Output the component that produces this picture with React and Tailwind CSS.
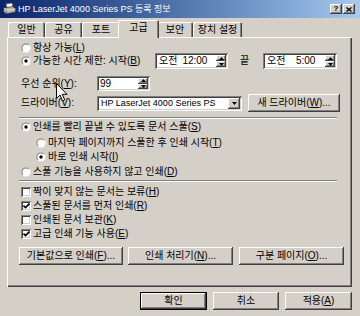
import React from "react";

const raised = "bg-[#d4d0c8] shadow-[inset_-1px_-1px_#404040,inset_1px_1px_#ffffff,inset_-2px_-2px_#808080,inset_2px_2px_#d4d0c8]";
const sunken = "bg-white shadow-[inset_1px_1px_#808080,inset_-1px_-1px_#ffffff,inset_2px_2px_#404040,inset_-2px_-2px_#d4d0c8]";

function U({ children }) {
  return <span className="underline underline-offset-1">{children}</span>;
}

function Radio({ checked }) {
  return (
    <svg width="10" height="10" viewBox="0 0 12 12" className="shrink-0">
      <defs>
        <linearGradient id="rg" x1="0" y1="0" x2="1" y2="1">
          <stop offset="0.45" stopColor="#808080" />
          <stop offset="0.55" stopColor="#ffffff" />
        </linearGradient>
      </defs>
      <circle cx="6" cy="6" r="5.5" fill="url(#rg)" />
      <circle cx="6" cy="6" r="4.3" fill="#fff" />
      {checked && <circle cx="6" cy="6" r="2" fill="#000" />}
    </svg>
  );
}

function Check({ checked }) {
  return (
    <div className={`w-[10px] h-[10px] shrink-0 flex items-center justify-center ${sunken}`}>
      {checked && (
        <svg width="7" height="6" viewBox="0 0 7 6">
          <path d="M0.5 2.5 L2.5 4.5 L6.5 0.5" stroke="#000" strokeWidth="1.6" fill="none" />
        </svg>
      )}
    </div>
  );
}

function Spinner() {
  return (
    <div className="flex flex-col w-[12px] h-full py-[2px] pr-[2px]">
      <div className={`flex-1 flex items-center justify-center ${raised}`}>
        <svg width="5" height="3" viewBox="0 0 5 3"><path d="M0 3 L2.5 0 L5 3Z" fill="#000" /></svg>
      </div>
      <div className={`flex-1 flex items-center justify-center ${raised}`}>
        <svg width="5" height="3" viewBox="0 0 5 3"><path d="M0 0 L2.5 3 L5 0Z" fill="#000" /></svg>
      </div>
    </div>
  );
}

function TimeField({ left, right, w }) {
  return (
    <div className={`flex items-center h-[16px] ${w} ${sunken}`}>
      <div className="flex-1 flex pl-[4px] gap-[5px]">
        <span>{left}</span>
        <span>{right}</span>
      </div>
      <Spinner />
    </div>
  );
}

function Btn({ children, w, def }) {
  if (def) {
    return (
      <div className={`${w} h-[18px] border border-black flex`}>
        <div className={`flex-1 flex items-center justify-center ${raised}`}>{children}</div>
      </div>
    );
  }
  return <div className={`${w} h-[18px] flex items-center justify-center ${raised}`}>{children}</div>;
}

export default function App() {
  const tabs = [
    { label: "일반", w: "w-[37px]" },
    { label: "공유", w: "w-[37px]" },
    { label: "포트", w: "w-[38px]" },
    { label: "고급", w: "w-[37px]", active: true },
    { label: "보안", w: "w-[36px]" },
    { label: "장치 설정", w: "w-[49px]" },
  ];

  return (
    <div className="relative w-[360px] h-[316px] bg-[#d4d0c8] overflow-hidden flex flex-col text-[10px] leading-[12px] text-black font-['Liberation_Sans','Noto_Sans_CJK_KR',sans-serif]">
      {/* title bar */}
      <div className="h-[18px] shrink-0 flex items-center pl-[3px] pr-[5px] bg-linear-to-r from-[#0a246a] to-[#a6caf0]">
        <svg width="13" height="12" viewBox="0 0 13 12" className="shrink-0">
          <path d="M3 1 L9 0 L10 4 L4 5Z" fill="#fff" stroke="#555" strokeWidth="0.6" />
          <path d="M1 5 L10 3.5 L12.5 6 L12.5 9 L3 11 L0.5 8.5Z" fill="#b8b4ac" stroke="#333" strokeWidth="0.7" />
          <path d="M1 5 L3.5 7.5 L12.5 6" fill="none" stroke="#fff" strokeWidth="0.6" />
          <path d="M3.5 7.5 L3 11" stroke="#333" strokeWidth="0.6" />
        </svg>
        <span className="ml-[2px] text-white text-[9px] leading-[12px] whitespace-nowrap">
          HP LaserJet 4000 Series PS 등록 정보
        </span>
        <div className="ml-auto flex gap-[1px]">
          <div className={`w-[12px] h-[10px] flex items-center justify-center text-[8px] font-bold leading-none ${raised}`}>?</div>
          <div className={`w-[12px] h-[10px] flex items-center justify-center ${raised}`}>
            <svg width="6" height="5" viewBox="0 0 6 5"><path d="M0.5 0.5 L5.5 4.5 M5.5 0.5 L0.5 4.5" stroke="#000" strokeWidth="1.3" /></svg>
          </div>
        </div>
      </div>

      {/* tabs */}
      <div className="h-[19px] shrink-0 flex items-end pl-[8px]">
        {tabs.map((t) =>
          t.active ? (
            <div
              key={t.label}
              className="relative z-10 -mx-[2px] mb-[-1px] w-[41px] h-[18px] bg-[#d4d0c8] rounded-t-[2px] shadow-[inset_1px_1px_#ffffff,inset_-1px_0_#404040,inset_-2px_0_#808080] flex items-start justify-center pt-[2px]"
            >
              {t.label}
            </div>
          ) : (
            <div
              key={t.label}
              className={`${t.w} h-[15px] rounded-t-[2px] shadow-[inset_1px_1px_#ffffff,inset_-1px_0_#404040,inset_-2px_0_#808080] flex items-start justify-center pt-[2px] whitespace-nowrap`}
            >
              {t.label}
            </div>
          )
        )}
      </div>

      {/* panel */}
      <div className="ml-[7px] w-[345px] h-[250px] shrink-0 shadow-[inset_1px_1px_#ffffff,inset_-1px_-1px_#404040,inset_-2px_-2px_#808080] flex flex-col pt-[5px] pl-[14px]">
        <div className="h-[11px] flex items-center gap-[2px]">
          <Radio />
          <span>항상 가능(<U>L</U>)</span>
        </div>

        <div className="h-[16px] flex items-center">
          <Radio checked />
          <span className="ml-[2px] w-[122px]">가능한 시간 제한: 시작(<U>B</U>)</span>
          <TimeField left="오전" right="12:00" w="w-[73px]" />
          <span className="w-[35px] pl-[12px]">끝</span>
          <TimeField left="오전" right={"\u00a0\u00a05:00"} w="w-[74px]" />
        </div>

        <div className="mt-[7px] h-[15px] flex items-center">
          <span className="w-[76px]">우선 순위(<U>Y</U>):</span>
          <div className={`w-[53px] h-[15px] flex items-center ${sunken}`}>
            <span className="flex-1 pl-[3px]">99</span>
            <Spinner />
          </div>
        </div>

        <div className="mt-[3px] h-[18px] flex items-center">
          <span className="w-[76px]">드라이버(<U>V</U>):</span>
          <div className={`w-[145px] h-[15px] flex items-center overflow-hidden ${sunken}`}>
            <span className="flex-1 pl-[4px] whitespace-nowrap text-[9px]">HP LaserJet 4000 Series PS</span>
            <div className="h-full py-[2px] pr-[2px]">
              <div className={`w-[12px] h-full flex items-center justify-center ${raised}`}>
                <svg width="5" height="3" viewBox="0 0 5 3"><path d="M0 0 L2.5 3 L5 0Z" fill="#000" /></svg>
              </div>
            </div>
          </div>
          <div className="ml-[6px]">
            <Btn w="w-[92px]">새 드라이버(<U>W</U>)...</Btn>
          </div>
        </div>

        <div className="mt-[5px] -ml-[2px] w-[318px] h-[2px] border-t border-[#808080] border-b border-b-white" />

        <div className="mt-[1px] h-[14px] flex items-center gap-[2px]">
          <Radio checked />
          <span>인쇄를 빨리 끝낼 수 있도록 문서 스풀(<U>S</U>)</span>
        </div>
        <div className="mt-[2px] ml-[15px] h-[14px] flex items-center gap-[2px]">
          <Radio />
          <span>마지막 페이지까지 스풀한 후 인쇄 시작(<U>T</U>)</span>
        </div>
        <div className="ml-[15px] h-[14px] flex items-center gap-[2px]">
          <Radio checked />
          <span>바로 인쇄 시작(<U>I</U>)</span>
        </div>
        <div className="mt-[1px] h-[14px] flex items-center gap-[2px]">
          <Radio />
          <span>스풀 기능을 사용하지 않고 인쇄(<U>D</U>)</span>
        </div>

        <div className="mt-[1px] -ml-[2px] w-[318px] h-[2px] border-t border-[#808080] border-b border-b-white" />

        <div className="mt-[3px] h-[14px] flex items-center gap-[2px]">
          <Check />
          <span>짝이 맞지 않는 문서는 보류(<U>H</U>)</span>
        </div>
        <div className="h-[14px] flex items-center gap-[2px]">
          <Check checked />
          <span>스풀된 문서를 먼저 인쇄(<U>R</U>)</span>
        </div>
        <div className="h-[14px] flex items-center gap-[2px]">
          <Check />
          <span>인쇄된 문서 보관(<U>K</U>)</span>
        </div>
        <div className="h-[14px] flex items-center gap-[2px]">
          <Check checked />
          <span>고급 인쇄 기능 사용(<U>E</U>)</span>
        </div>

        <div className="mt-[6px] -ml-[2px] flex">
          <Btn w="w-[104px]">기본값으로 인쇄(<U>F</U>)...</Btn>
          <div className="ml-[5px]"><Btn w="w-[105px]">인쇄 처리기(<U>N</U>)...</Btn></div>
          <div className="ml-[6px]"><Btn w="w-[105px]">구분 페이지(<U>O</U>)...</Btn></div>
        </div>
      </div>

      {/* dialog buttons */}
      <div className="mt-[5px] flex justify-end gap-[6px] pr-[8px]">
        <Btn w="w-[67px]" def>확인</Btn>
        <Btn w="w-[66px]">취소</Btn>
        <Btn w="w-[67px]">적용(<U>A</U>)</Btn>
      </div>

      {/* mouse pointer */}
      <svg width="12" height="19" viewBox="0 0 12 19" className="absolute left-[56px] top-[83px]">
        <path d="M0.5 0.5 L0.5 15.5 L4 12 L6.5 18 L8.7 17 L6.3 11.3 L11 11.3 Z" fill="#fff" stroke="#000" strokeWidth="1" strokeLinejoin="miter" />
      </svg>
    </div>
  );
}
